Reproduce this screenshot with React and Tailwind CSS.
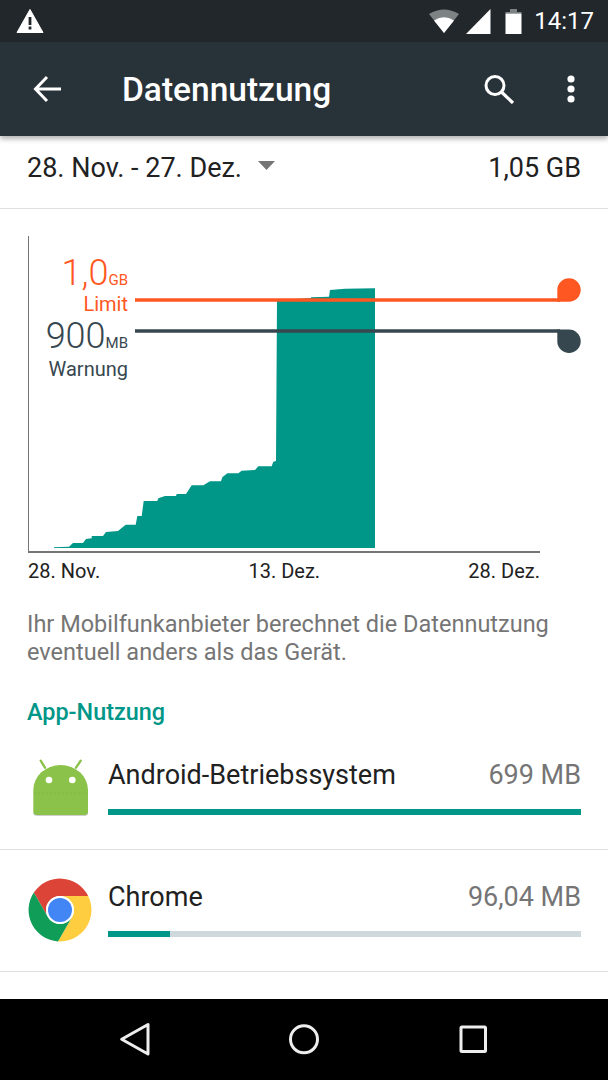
const usagePoints =
  "54,548 54,547.3 69,546.7 73,543 83,543 86,539 91.7,538.3 91.7,536 103,536 106,532 118,531 125.7,524.7 135.7,524.7 137.3,516 141.7,516 143.7,501 157.3,501 158.3,498.3 165,496 176,496 176.7,494 186,494 191.7,485.3 203.3,485.3 210,481.3 221,481.3 222.3,477.3 227.3,473.3 238.3,473.3 241.7,470.7 255,470 258.3,466.3 271.7,466.3 273.3,461.7 276,461 277,300 311,298 311,297.3 329,296.7 330,290 345,288.7 375,288.3 375,548";

function WarningIcon() {
  return (
    <svg width="28" height="24" viewBox="0 0 28 24">
      <path d="M14 0.5 L27 23.5 H1 Z" fill="#fff" strokeLinejoin="round" stroke="#fff" strokeWidth="1" />
      <rect x="12.6" y="8" width="2.8" height="8" fill="#21272b" />
      <rect x="12.6" y="17.5" width="2.8" height="3" fill="#21272b" />
    </svg>
  );
}

function StatusIcons() {
  return (
    <div className="flex items-center">
      <svg width="30" height="24" viewBox="0 0 30 24">
        <path d="M15 24 L0 5 Q15 -4 30 5 Z" fill="#7d8285" />
        <path d="M15 24 L5 11.5 Q15 5 25 11.5 Z" fill="#fff" />
      </svg>
      <svg className="ml-[7px]" width="25" height="25" viewBox="0 0 25 25">
        <path d="M24.5 0 V25 H0 Z" fill="#fff" />
      </svg>
      <svg className="ml-[14px]" width="17" height="25" viewBox="0 0 17 25">
        <path d="M5 0 H12 V3 H5 Z" fill="#7d8285" />
        <path d="M0.5 3 H16.5 V4.5 H0.5 Z" fill="#7d8285" />
        <rect x="0.5" y="4.5" width="16" height="20.5" fill="#fff" />
      </svg>
      <span className="ml-[12px] text-[24px] leading-none text-white">14:17</span>
    </div>
  );
}

function AndroidIcon() {
  return (
    <svg width="62" height="60" viewBox="0 0 62 60" className="shrink-0">
      <path d="M10.7 1.7 L15 8.7 M50.7 1.7 L46 8.7" stroke="#8bc34a" strokeWidth="2.4" strokeLinecap="round" />
      <path d="M3.3 31 A27.35 25 0 0 1 58 31 V53 Q58 56 55 56 H6.3 Q3.3 56 3.3 53 Z" fill="#8bc34a" />
      <path d="M3.8 54 Q3.8 56.5 6.3 56.5 H55 Q57.5 56.5 57.5 54" fill="none" stroke="#9e9e9e" strokeOpacity="0.5" />
      <circle cx="19" cy="21" r="3.3" fill="#fff" />
      <circle cx="42.3" cy="21" r="3.3" fill="#fff" />
      <path d="M4 34 H57" stroke="#7cb342" strokeDasharray="2 2" strokeWidth="0.7" />
    </svg>
  );
}

function ChromeIcon() {
  return (
    <svg width="64" height="64" viewBox="0 0 64 64" className="shrink-0">
      <path d="M32 18 H60.2 A31.5 31.5 0 0 0 5.8 14.6 L19.9 39 A14 14 0 0 1 32 18 Z" fill="#db4437" />
      <path d="M44.1 39 L30 63.4 A31.5 31.5 0 0 0 60.2 18 H32 A14 14 0 0 1 44.1 39 Z" fill="#ffcd40" />
      <path d="M19.9 39 L5.8 14.6 A31.5 31.5 0 0 0 30 63.4 L44.1 39 A14 14 0 0 1 19.9 39 Z" fill="#0f9d58" />
      <circle cx="32" cy="32" r="14" fill="#fff" />
      <circle cx="32" cy="32" r="12" fill="#4285f4" />
    </svg>
  );
}

function AppRow({ icon, name, size, percent, rowClass, iconClass, textClass }) {
  return (
    <div className={`flex border-b-[1.5px] border-[#e0e0e0] pr-[27px] ${rowClass}`}>
      <div className={`w-[108px] shrink-0 ${iconClass}`}>{icon}</div>
      <div className={`flex-1 ${textClass}`}>
        <div className="flex h-[32px] items-center justify-between">
          <span className="text-[27px] text-[#212121]">{name}</span>
          <span className="text-[27px] text-[#757575]">{size}</span>
        </div>
        <div className="mt-[18px] h-[6px] bg-[#cfd8dc]">
          <div className="h-full bg-[#009688]" style={{ width: percent + "%" }} />
        </div>
      </div>
    </div>
  );
}

export default function App() {
  return (
    <div className="flex h-[1080px] w-[608px] flex-col overflow-hidden bg-white font-['Roboto',sans-serif]">
      {/* status bar */}
      <div className="flex h-[42px] shrink-0 items-center justify-between bg-[#21272b] pl-[16px] pr-[14px]">
        <WarningIcon />
        <StatusIcons />
      </div>

      {/* toolbar */}
      <div className="relative z-10 flex h-[94px] shrink-0 items-center bg-[#283239] shadow-[0_3px_5px_rgba(0,0,0,0.3)]">
        <svg className="ml-[33px]" width="30" height="28" viewBox="0 0 30 28">
          <path d="M28 14 H3 M14 2 L2.5 14 L14 26" fill="none" stroke="#fff" strokeWidth="3" />
        </svg>
        <span className="ml-[59px] flex-1 pt-[2px] text-[33.5px] font-medium text-white">Datennutzung</span>
        <svg className="mr-[52px]" width="32" height="30" viewBox="0 0 32 30">
          <circle cx="12" cy="11.5" r="9" fill="none" stroke="#fff" strokeWidth="3" />
          <path d="M18.5 18 L30 29" stroke="#fff" strokeWidth="3.2" />
        </svg>
        <svg className="mr-[33px]" width="8" height="28" viewBox="0 0 8 28">
          <circle cx="4" cy="4" r="3.6" fill="#fff" />
          <circle cx="4" cy="14" r="3.6" fill="#fff" />
          <circle cx="4" cy="24" r="3.6" fill="#fff" />
        </svg>
      </div>

      {/* date range */}
      <div className="flex h-[73px] shrink-0 items-start justify-between border-b-[1.5px] border-[#e0e0e0] pl-[27px] pr-[27px] pt-[16px]">
        <div className="flex items-center">
          <span className="text-[27px] leading-[32px] text-[#212121]">28. Nov. - 27. Dez.</span>
          <svg className="mb-[6px] ml-[16px]" width="17" height="9" viewBox="0 0 17 9">
            <path d="M0 0 H17 L8.5 9 Z" fill="#757575" />
          </svg>
        </div>
        <span className="text-[27px] leading-[32px] text-[#212121]">1,05 GB</span>
      </div>

      {/* chart */}
      <div className="relative ml-[28px] mt-[27px] h-[318px] w-[580px] shrink-0">
        <svg width="580" height="318" viewBox="28 236 580 318">
          <path d="M28 236 V552 H540" fill="none" stroke="#757575" strokeWidth="2" />
          <polygon points={usagePoints} fill="#009688" />
          <path d="M135 300 H560" stroke="#ff5722" strokeWidth="3.4" />
          <path d="M135 331 H560" stroke="#37474f" strokeWidth="3.4" />
          <path d="M557.3 301.7 V290 A11.7 11.7 0 1 1 569 301.7 Z" fill="#ff5722" />
          <path d="M557.3 329.5 H569 A11.7 11.7 0 1 1 557.3 341.2 Z" fill="#37474f" />
        </svg>
        <div className="absolute left-[0px] top-[17px] w-[100px] text-right">
          <div className="h-[40px] leading-[40px] text-[#ff5722]">
            <span className="text-[36px] font-light">1,0</span>
            <span className="text-[15px]">GB</span>
          </div>
          <div className="h-[22px] text-[20px] leading-[22px] text-[#ff5722]">Limit</div>
          <div className="h-[43px] leading-[43px] text-[#37474f]">
            <span className="text-[36px] font-light">900</span>
            <span className="text-[15px]">MB</span>
          </div>
          <div className="h-[22px] text-[20px] leading-[22px] text-[#37474f]">Warnung</div>
        </div>
      </div>

      <div className="ml-[28px] mt-[5px] flex w-[512px] shrink-0 justify-between self-start text-[20px] leading-[24px] text-[#212121]">
        <span>28. Nov.</span>
        <span>13. Dez.</span>
        <span>28. Dez.</span>
      </div>

      <p className="ml-[27px] mt-[27px] shrink-0 whitespace-nowrap text-[23.5px] leading-[28px] text-[#757575]">
        Ihr Mobilfunkanbieter berechnet die Datennutzung
        <br />
        eventuell anders als das Gerät.
      </p>

      <div className="ml-[27px] mt-[32px] shrink-0 text-[23.4px] font-medium leading-[28px] text-[#009688]">App-Nutzung</div>

      <div className="mt-[13px] shrink-0">
        <AppRow icon={<AndroidIcon />} name="Android-Betriebssystem" size="699 MB" percent={100} rowClass="h-[111px]" iconClass="pl-[30px] pt-[20px]" textClass="pt-[20px]" />
        <AppRow icon={<ChromeIcon />} name="Chrome" size="96,04 MB" percent={13.1} rowClass="h-[122px]" iconClass="pl-[28px] pt-[28px]" textClass="pt-[31px]" />
      </div>

      <div className="flex-1" />

      {/* nav bar */}
      <div className="relative flex h-[81px] shrink-0 items-center bg-black">
        <svg width="608" height="81" viewBox="0 999 608 81">
          <path d="M121.7 1039.3 L148 1024.5 V1054 Z" fill="none" stroke="#eeeeee" strokeWidth="3" strokeLinejoin="round" />
          <circle cx="304" cy="1039.3" r="13.5" fill="none" stroke="#eeeeee" strokeWidth="3" />
          <rect x="461" y="1027" width="24.5" height="24.5" rx="1" fill="none" stroke="#eeeeee" strokeWidth="3" />
        </svg>
      </div>
    </div>
  );
}
